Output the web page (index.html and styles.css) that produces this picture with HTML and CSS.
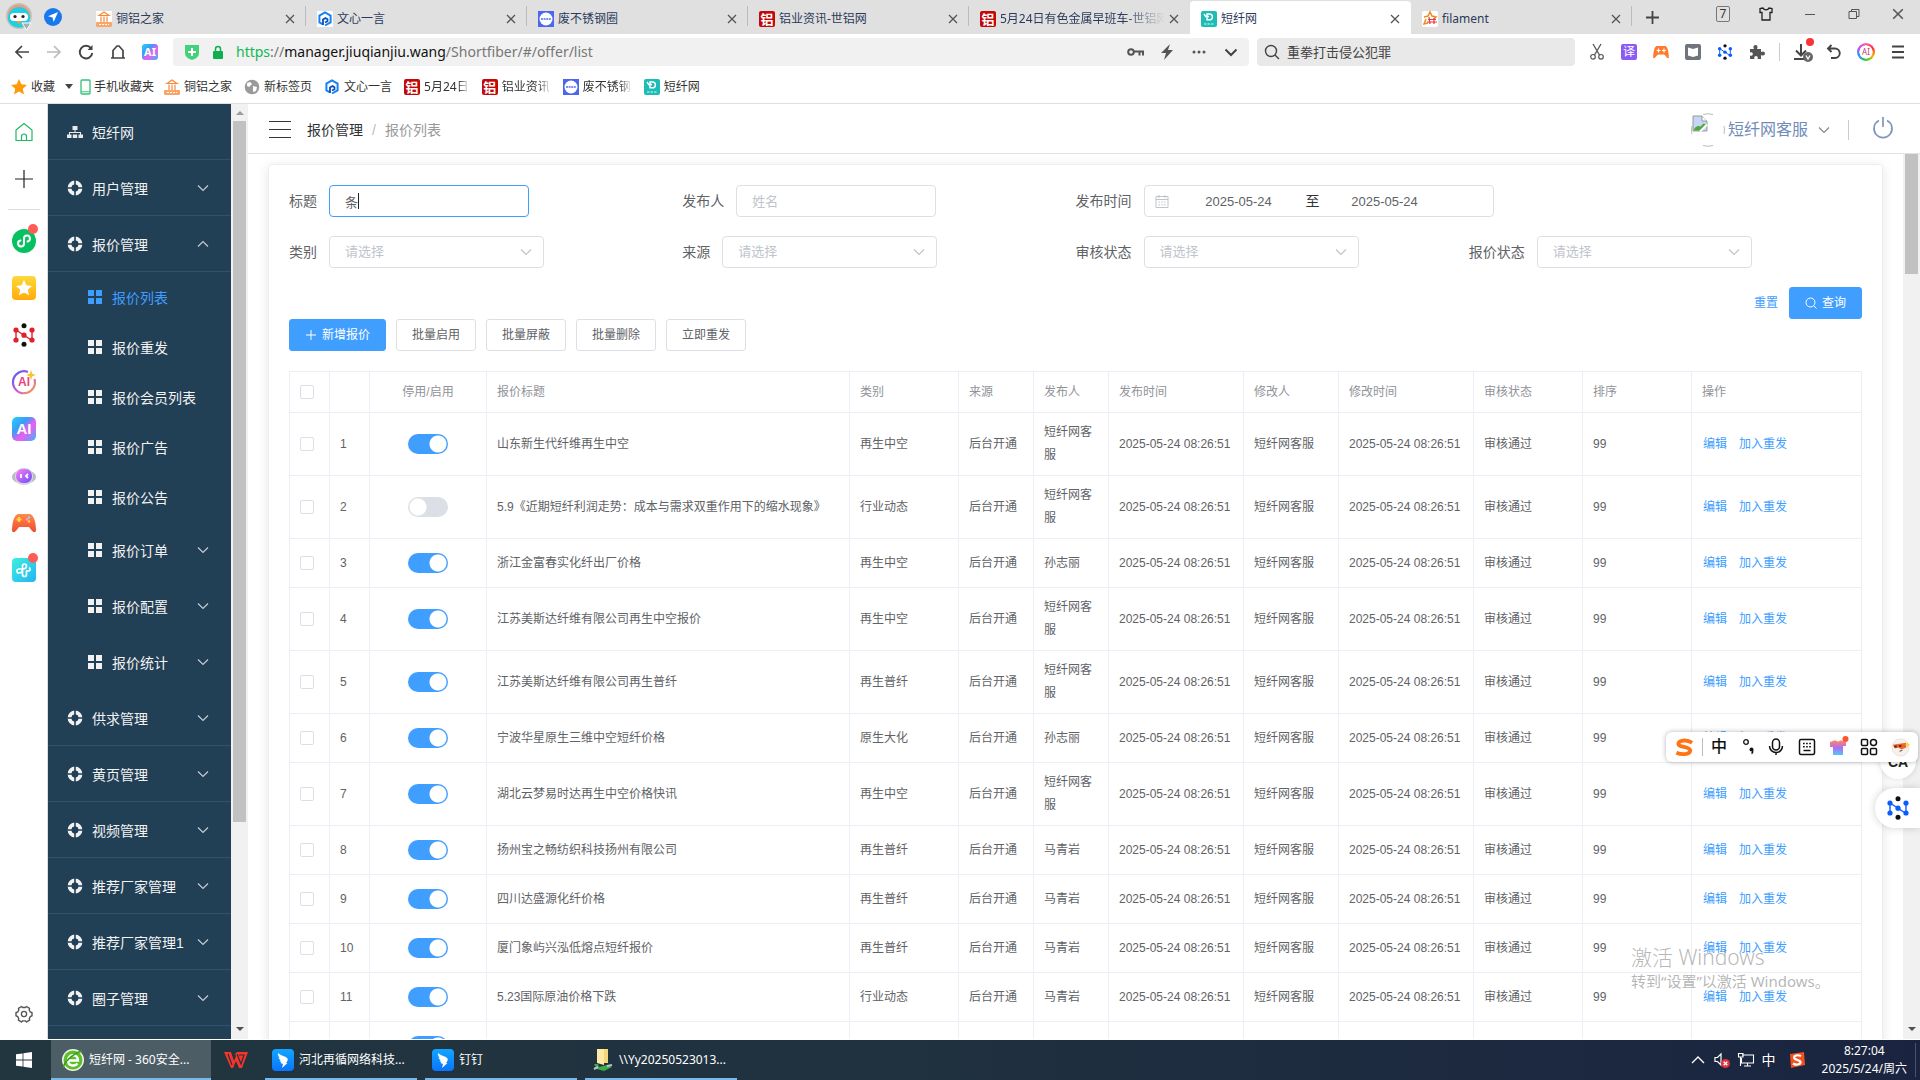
FILE: index.html
```html
<!DOCTYPE html>
<html lang="zh-CN">
<head>
<meta charset="utf-8">
<title>短纤网</title>
<link rel="stylesheet" href="styles.css">
</head>
<body>
<svg class="defs" aria-hidden="true">
  <defs>
    <linearGradient id="g-ai" x1="0" y1="0" x2="1" y2="1"><stop offset="0" stop-color="#22d3f5"/><stop offset=".35" stop-color="#3b9cf8"/><stop offset=".6" stop-color="#f25bf0"/><stop offset="1" stop-color="#38b6ff"/></linearGradient>
    <linearGradient id="g-ring" x1="0" y1="0" x2="1" y2="1"><stop offset="0" stop-color="#4a5cf0"/><stop offset=".5" stop-color="#c05ae0"/><stop offset="1" stop-color="#ffa53a"/></linearGradient>
    <linearGradient id="g-star" x1="0" y1="0" x2="0" y2="1"><stop offset="0" stop-color="#ffd93b"/><stop offset="1" stop-color="#ffab0a"/></linearGradient>
    <linearGradient id="g-bot" x1="0" y1="0" x2="1" y2="1"><stop offset="0" stop-color="#ff7ef2"/><stop offset="1" stop-color="#6a4dff"/></linearGradient>
    <linearGradient id="g-pad" x1="0" y1="0" x2="0" y2="1"><stop offset="0" stop-color="#ff8a4a"/><stop offset="1" stop-color="#f04a32"/></linearGradient>
    <linearGradient id="g-clover" x1="0" y1="0" x2="1" y2="1"><stop offset="0" stop-color="#3cf0dc"/><stop offset="1" stop-color="#22b4f5"/></linearGradient>
    <linearGradient id="g-shirt" x1="0" y1="0" x2="0" y2="1"><stop offset="0" stop-color="#ff8a5c"/><stop offset=".5" stop-color="#b06cf5"/><stop offset="1" stop-color="#4cc8ff"/></linearGradient>
    <linearGradient id="g-ding" x1="0" y1="0" x2="0" y2="1"><stop offset="0" stop-color="#12a6ff"/><stop offset="1" stop-color="#0a74ff"/></linearGradient>
    <symbol id="close" viewBox="0 0 10 10"><path d="M1 1l8 8M9 1L1 9" fill="none" stroke="currentColor" stroke-width="1.300"/></symbol>
    <symbol id="down" viewBox="0 0 12 12"><path d="M1 3.500l5 5 5-5" fill="none" stroke="currentColor" stroke-width="1.200"/></symbol>
    <symbol id="up" viewBox="0 0 12 12"><path d="M1 8.500l5-5 5 5" fill="none" stroke="currentColor" stroke-width="1.200"/></symbol>
    <symbol id="help" viewBox="0 0 16 16"><circle cx="8" cy="8" r="5.400" fill="none" stroke="currentColor" stroke-width="4"/><path d="M8 0v16M0 8h16" stroke="#213f55" stroke-width="1.600"/><circle cx="8" cy="8" r="3.300" fill="#213f55"/></symbol>
    <symbol id="menu" viewBox="0 0 14 14"><path d="M0 0h6v6H0zM8 0h6v6H8zM0 8h6v6H0zM8 8h6v6H8z" fill="currentColor"/></symbol>
    <symbol id="bank" viewBox="0 0 16 16"><rect width="16" height="16" fill="#fff"/><path d="M3 4.500L8 1l5 3.500zM5 5.500V11M8 5.500V11M11 5.500V11" fill="none" stroke="#f58a3a" stroke-width="1.200"/><rect y="11" width="16" height="5" rx="1" fill="#f9a66b"/><path d="M3 13.500h10" stroke="#fff" stroke-dasharray="2 1"/></symbol>
    <symbol id="wenxin" viewBox="0 0 16 16"><rect width="16" height="16" rx="1" fill="#fff"/><path d="M6 13.300L2.400 11.300V4.700L8 1.500l5.600 3.200v6.600L8 14.500" fill="none" stroke="#1683f5" stroke-width="2"/><path d="M6 14V8.500l2.500-1.500 2 1.300v2L8 11.500" fill="none" stroke="#0b4fc0" stroke-width="1.800"/></symbol>
    <symbol id="steel" viewBox="0 0 16 16"><rect width="16" height="16" fill="#4c66ee"/><circle cx="8" cy="8" r="6.500" fill="#fff"/><path d="M3 8h10" stroke="#7d90f3" stroke-width="2" stroke-dasharray="2 .6"/></symbol>
    <symbol id="duan" viewBox="0 0 16 16"><rect width="16" height="16" rx="2" fill="#1ebcb4"/><path d="M6 3h2.500a2.800 2.800 0 0 1 0 5.800H6zM4 5.500h4M3 3l2 3" fill="none" stroke="#fff" stroke-width="1.400"/><path d="M3 13h10" stroke="#8fe6df" stroke-width="1.600" stroke-dasharray="2.500 1"/></symbol>
    <symbol id="nodes" viewBox="0 0 24 24"><path d="M4 17.500V7l16 10.500V7" fill="none" stroke="currentColor" stroke-width="1.400"/><g fill="currentColor"><circle cx="4" cy="7" r="2.600"/><circle cx="4" cy="17" r="2.600"/><circle cx="20" cy="7" r="2.600"/><circle cx="20" cy="17" r="2.600"/><circle cx="12" cy="12.200" r="2.600"/></g><circle cx="12" cy="2.800" r="2.500" fill="#111"/><circle cx="12" cy="21.200" r="2.500" fill="#111"/></symbol>
    <symbol id="ding" viewBox="0 0 22 22"><rect width="22" height="22" rx="4" fill="url(#g-ding)"/><path d="M6 4c3 3 8 3 9.500 5.500.8 1.500-.5 3.500-1.500 4.500h1.500L10 19l1-4-2.500-1 .8-1L7.500 12l1-.8L6.500 9l1-.5C6 7 6 5.500 6 4z" fill="#fff"/></symbol>
  </defs>
</svg>

<header class="browser">
  <div class="tabstrip">
    <div class="profile">
      <svg width="26" height="28" viewBox="0 0 26 28"><circle cx="13" cy="13" r="13" fill="#bfc4c6"/><circle cx="13" cy="13" r="11.500" fill="#f69a76"/><path d="M2 15a11 11 0 0 1 22 0 11 9.500 0 0 1-22 0z" fill="#20cfe4"/><rect x="4" y="10" width="18" height="8" rx="4" fill="#fff"/><circle cx="9" cy="13.500" r="1.600" fill="#222"/><circle cx="17" cy="13.500" r="1.600" fill="#222"/><path d="M10 18h6l-3 3z" fill="#ff9b2e"/><path d="M16 20h9l-4.500 7z" fill="#a9adb0" stroke="#fff"/></svg>
      <svg width="18" height="18" viewBox="0 0 18 18"><circle cx="9" cy="9" r="9" fill="#1878ee"/><path d="M14 4L9.700 14 8.500 9.600 4 8.300z" fill="#fff"/></svg>
    </div>
    <div class="tab"><svg class="fav"><use href="#bank"/></svg><span>铜铝之家</span><button aria-label="关闭"><svg><use href="#close"/></svg></button></div>
    <div class="tab"><svg class="fav"><use href="#wenxin"/></svg><span>文心一言</span><button aria-label="关闭"><svg><use href="#close"/></svg></button></div>
    <div class="tab"><svg class="fav"><use href="#steel"/></svg><span>废不锈钢圈</span><button aria-label="关闭"><svg><use href="#close"/></svg></button></div>
    <div class="tab"><b class="lv">铝</b><span>铝业资讯-世铝网</span><button aria-label="关闭"><svg><use href="#close"/></svg></button></div>
    <div class="tab"><b class="lv">铝</b><span class="fade">5月24日有色金属早班车-世铝网</span><button aria-label="关闭"><svg><use href="#close"/></svg></button></div>
    <div class="tab active"><svg class="fav"><use href="#duan"/></svg><span>短纤网</span><button aria-label="关闭"><svg><use href="#close"/></svg></button></div>
    <div class="tab"><svg class="fav" viewBox="0 0 16 16"><rect width="16" height="16" rx="2" fill="#fff"/><path d="M2 6l4-1 2-4 2 4 4 1-2 2M4 8l-2 5 4-1" fill="none" stroke="#f08a24" stroke-width="1.500"/><path d="M5 11h10M6 8.500h8M7 6l1 7M12 7v6" stroke="#e23b3b" stroke-width="1.200"/></svg><span>filament</span><button aria-label="关闭"><svg><use href="#close"/></svg></button></div>
    <button class="newtab" aria-label="新标签"><svg width="13" height="13" viewBox="0 0 13 13"><path d="M6.500 0v13M0 6.500h13" stroke="#444" stroke-width="1.800"/></svg></button>
    <div class="wincontrols">
      <button class="count">7</button>
      <button aria-label="皮肤"><svg width="14" height="14" viewBox="0 0 14 14"><path d="M4 1L1 1.500v4h2V13h8V5.500h2v-4L10 1C9 3.500 5 3.500 4 1z" fill="none" stroke="#222" stroke-width="1.300"/></svg></button>
      <button aria-label="最小化"><svg width="12" height="12" viewBox="0 0 12 12"><path d="M1 6.500h10" stroke="#555"/></svg></button>
      <button aria-label="还原"><svg width="12" height="12" viewBox="0 0 12 12"><path d="M1 3.500h7.500v7H1zM3.500 3.500v-2H11v7H8.500" fill="none" stroke="#555"/></svg></button>
      <button aria-label="关闭窗口"><svg width="12" height="12"><use href="#close"/></svg></button>
    </div>
  </div>

  <div class="addressrow">
    <nav class="navbtns">
      <svg viewBox="0 0 16 16"><path d="M15 8H2M8 2L2 8l6 6" fill="none" stroke="#444" stroke-width="1.700"/></svg>
      <svg viewBox="0 0 16 16"><path d="M1 8h13M8 2l6 6-6 6" fill="none" stroke="#bbb" stroke-width="1.700"/></svg>
      <svg viewBox="0 0 16 16"><path d="M13 4.200A6.300 6.300 0 1 0 14.300 9" fill="none" stroke="#444" stroke-width="1.900"/><path d="M14.500 1v5h-5z" fill="#444"/></svg>
      <svg viewBox="0 0 16 16"><path d="M3 14V6.500L7 2h2l4 4.500V14M1 14h14" fill="none" stroke="#444" stroke-width="1.700"/></svg>
      <svg viewBox="0 0 16 16"><rect width="16" height="16" rx="3" fill="url(#g-ai)"/><text x="8" y="12" class="ai-s" fill="#fff">AI</text></svg>
    </nav>
    <div class="urlbar">
      <svg width="16" height="16" viewBox="0 0 16 16"><path d="M1 1h14v8c0 4-4 6-7 7-3-1-7-3-7-7z" fill="#43d17a"/><path d="M8 4v8M4 8h8" stroke="#fff" stroke-width="2"/></svg>
      <svg width="12" height="14" viewBox="0 0 12 14"><rect x="1" y="6" width="10" height="8" rx="1" fill="#0cb04e"/><path d="M3.500 6V4a2.500 2.500 0 0 1 5 0v2" fill="none" stroke="#0cb04e" stroke-width="1.500"/></svg>
      <p class="url"><span class="scheme">https</span>://<span class="host">manager.jiuqianjiu.wang</span>/Shortfiber/#/offer/list</p>
      <div class="urlicons">
        <svg viewBox="0 0 16 16"><circle cx="4" cy="8" r="2.800" fill="none" stroke="#555" stroke-width="2"/><path d="M7 7.500h9v4M12.500 7.500v4" fill="none" stroke="#555" stroke-width="2"/></svg>
        <svg viewBox="0 0 16 16"><path d="M11 0L2 9h5l-2 7 9-10H9z" fill="#555"/></svg>
        <svg viewBox="0 0 16 16"><g fill="#555"><circle cx="3" cy="8" r="1.500"/><circle cx="8" cy="8" r="1.500"/><circle cx="13" cy="8" r="1.500"/></g></svg>
        <svg viewBox="0 0 16 16"><path d="M2.500 5.500L8 11l5.500-5.500" fill="none" stroke="#444" stroke-width="2"/></svg>
      </div>
    </div>
    <div class="searchbar">
      <svg width="16" height="16" viewBox="0 0 16 16"><circle cx="7" cy="7" r="5.500" fill="none" stroke="#444" stroke-width="1.400"/><path d="M11 11l4 4" stroke="#444" stroke-width="1.400"/></svg>
      <span>重拳打击侵公犯罪</span>
    </div>
    <div class="tools">
      <svg viewBox="0 0 16 16"><path d="M4 0l6.500 11M12 0L5.500 11" stroke="#555" stroke-width="1.300"/><circle cx="4" cy="12.800" r="2.300" fill="none" stroke="#555" stroke-width="1.200"/><circle cx="12" cy="12.800" r="2.300" fill="none" stroke="#555" stroke-width="1.200"/></svg>
      <b class="yi">译</b>
      <svg viewBox="0 0 16 16"><path d="M3.500 2h9C15 3 16 10 15.800 14c-2 1-3-3-5-3.500h-5.500C3.500 11 2 15 .2 14 0 10 1 3 3.500 2z" fill="#ff7a2e"/><path d="M5.500 4.500v4M3.500 6.500h4M9 6.500h4M11 4.500v4" stroke="#fff" stroke-width="1.200"/></svg>
      <svg viewBox="0 0 16 16"><rect width="16" height="16" rx="2" fill="#70757d"/><path d="M3 3.500l5 1.500 5-1.500v8L8 13l-5-1.500z" fill="#fff"/></svg>
      <svg class="blue"><use href="#nodes"/></svg>
      <svg viewBox="0 0 16 16"><path d="M1 5h4c-1.500-3 .5-4 1.500-4S9.500 2 8 5h4v3c3-1.500 4 .5 4 1.500S15 12.500 12 11v4H8.500c1-2-.5-3-1.500-3s-2.500 1-1.500 3H1v-3.500c2 .8 2.800-.3 2.800-1.500S3 7.700 1 8.500z" fill="#555"/></svg>
      <i class="vline"></i>
      <svg class="dl" viewBox="0 0 20 20"><path d="M8 2v11M3 8.500l5 5 5-5M1 17h11" fill="none" stroke="#444" stroke-width="2"/><circle cx="15" cy="15" r="5" fill="#666"/><path d="M13 13.500l2 3.500 2-3.500" fill="none" stroke="#fff" stroke-width="1.300"/><circle cx="17" cy="0" r="4" fill="#fa3434"/></svg>
      <svg viewBox="0 0 16 16"><path d="M5.500 1L2 4.500 5.500 8M2 4.500h7a4.500 4.500 0 0 1 0 9.500H5" fill="none" stroke="#444" stroke-width="1.900"/></svg>
      <i class="aiball">AI</i>
      <svg viewBox="0 0 16 16"><path d="M2 2.500h12M2 8h12M2 13.500h12" stroke="#444" stroke-width="2"/></svg>
    </div>
  </div>

  <nav class="bookmarks">
    <a href="#" class="fav-root"><svg viewBox="0 0 16 16"><path d="M8 0l2.400 5.300 5.600.6-4.200 3.800 1.200 5.800L8 12.600l-5 2.900 1.200-5.800L0 5.900l5.600-.6z" fill="#ff9a0a"/></svg><span>收藏</span><i class="caret-down"></i></a>
    <a href="#" class="phone"><svg viewBox="0 0 16 16"><rect x="4" y="1" width="9" height="14" rx="1" fill="none" stroke="#36c27a" stroke-width="1.300"/><path d="M4 12.800h9" stroke="#36c27a"/></svg><span>手机收藏夹</span></a>
    <a href="#"><svg><use href="#bank"/></svg><span>铜铝之家</span></a>
    <a href="#"><svg viewBox="0 0 16 16"><circle cx="8" cy="8" r="7.300" fill="#9a9a9a"/><path d="M3 4l3-1 2 2-3 3-2-1zM9 7l4 1-1 4-3 1z" fill="#fff"/></svg><span>新标签页</span></a>
    <a href="#"><svg><use href="#wenxin"/></svg><span>文心一言</span></a>
    <a href="#"><b class="lv">铝</b><span class="fade">5月24日</span></a>
    <a href="#"><b class="lv">铝</b><span class="fade">铝业资讯</span></a>
    <a href="#"><svg><use href="#steel"/></svg><span class="fade">废不锈钢</span></a>
    <a href="#"><svg><use href="#duan"/></svg><span>短纤网</span></a>
  </nav>
</header>

<div class="workspace">
  <aside class="rail">
    <div class="cell"><svg width="20" height="20" viewBox="0 0 18 20"><path d="M1 8l8-6.500L17 8v10.500H1zM6.500 18.500v-4a2.500 2.500 0 0 1 5 0v4" fill="none" stroke="#1fb864" stroke-width="1.200"/></svg></div>
    <div class="cell"><svg width="18" height="18" viewBox="0 0 18 18"><path d="M9 0v18M0 9h18" stroke="#222" stroke-width="1.200"/></svg></div>
    <i class="hline"></i>
    <div class="cell dot"><svg viewBox="0 0 24 24"><circle cx="12" cy="12" r="12" fill="#07c160"/><path d="M8.500 11.500a3 3 0 1 0 3.500 3.500V9a3 3 0 1 1 3.500 3.500" fill="none" stroke="#fff" stroke-width="2" stroke-linecap="round"/></svg></div>
    <div class="cell"><svg viewBox="0 0 24 24"><rect width="24" height="24" rx="4" fill="url(#g-star)"/><path d="M12 4l2.400 5.300 5.600.6-4.200 3.800 1.200 5.500-5-2.800-5 2.800 1.200-5.500L4 9.900l5.600-.6z" fill="#fff"/></svg></div>
    <div class="cell"><svg class="red"><use href="#nodes"/></svg></div>
    <div class="cell"><svg viewBox="0 0 24 24"><path d="M16 2A11 11 0 1 0 22.500 9" fill="none" stroke="url(#g-ring)" stroke-width="2.200"/><path d="M19 0l1.300 3.700L24 5l-3.700 1.300L19 10l-1.300-3.700L14 5l3.700-1.300z" fill="#f5c62c"/><text x="12" y="16" class="ai-m" fill="#e8457e">AI</text></svg></div>
    <div class="cell"><svg viewBox="0 0 24 24"><rect width="24" height="24" rx="5" fill="url(#g-ai)"/><text x="12" y="17" class="ai-l" fill="#fff">AI</text></svg></div>
    <div class="cell"><svg viewBox="0 0 24 24"><ellipse cx="12" cy="13" rx="12" ry="7" fill="#b9bcc4"/><rect x="3" y="4" width="18" height="17" rx="8" fill="#d5d7de"/><rect x="4" y="5" width="16" height="14" rx="6.500" fill="url(#g-bot)"/><path d="M9 10v4M16 10l-2 2 2 2" fill="none" stroke="#fff" stroke-width="1.800"/></svg></div>
    <div class="cell"><svg viewBox="0 0 24 24"><path d="M6 3h12c4 1 6 9 6 17-2 3-4 0-7-4H7C4 20 2 23 0 20 0 12 2 4 6 3z" fill="url(#g-pad)"/><path d="M7 6v5M4.500 8.500h5" stroke="#ffd23f" stroke-width="2"/><circle cx="17" cy="6.500" r="1.200" fill="#8adcff"/><circle cx="17" cy="10.500" r="1.200" fill="#ffd23f"/><circle cx="15" cy="8.500" r="1.200" fill="#ff9be0"/></svg></div>
    <div class="cell dot"><svg viewBox="0 0 24 24"><rect width="24" height="24" rx="4" fill="url(#g-clover)"/><path d="M10.500 13.500V8a2 2 0 0 1 4 0c0 2-1.500 3-4 3H7a2 2 0 0 0 0 4c2 0 3.500-1.500 3.500-4M10.500 13v3.500a2 2 0 0 0 4 0V13H17a2 2 0 0 0 0-3.500" fill="none" stroke="#fff" stroke-width="1.700"/></svg></div>
    <div class="cell gear"><svg width="18" height="18" viewBox="0 0 18 18"><path d="M6.500 1.500l1.200 1h2.600l1.200-1 3 1.800-.3 1.700 1.100 2 1.700.8v3l-1.700.8-1 1.900.3 1.600-3 1.800-1.300-1H7.700l-1.300 1-3-1.800.3-1.600-1-1.900L1 10.800v-3L2.700 7l1.100-2-.3-1.700z" fill="none" stroke="#555" stroke-width="1.400"/><circle cx="9" cy="9" r="2.600" fill="none" stroke="#555" stroke-width="1.300"/></svg></div>
  </aside>

  <nav class="sidebar">
    <a href="#" class="item"><svg viewBox="0 0 16 16"><path d="M5.500 2h5v4h-5zM0 10.500h4.500V14H0zM5.800 10.500h4.400V14H5.800zM11.500 10.500H16V14h-4.500zM7.500 6h1v2h5.500v2.500h-1V9H3v1.500H2V8h5.500z" fill="#e9e9ea"/></svg><span>短纤网</span></a>
    <a href="#" class="item"><svg><use href="#help"/></svg><span>用户管理</span><svg class="arrow"><use href="#down"/></svg></a>
    <a href="#" class="item"><svg><use href="#help"/></svg><span>报价管理</span><svg class="arrow"><use href="#up"/></svg></a>
    <a href="#" class="sub current"><svg><use href="#menu"/></svg><span>报价列表</span></a>
    <a href="#" class="sub"><svg><use href="#menu"/></svg><span>报价重发</span></a>
    <a href="#" class="sub"><svg><use href="#menu"/></svg><span>报价会员列表</span></a>
    <a href="#" class="sub"><svg><use href="#menu"/></svg><span>报价广告</span></a>
    <a href="#" class="sub"><svg><use href="#menu"/></svg><span>报价公告</span></a>
    <a href="#" class="sub tall"><svg><use href="#menu"/></svg><span>报价订单</span><svg class="arrow"><use href="#down"/></svg></a>
    <a href="#" class="sub tall"><svg><use href="#menu"/></svg><span>报价配置</span><svg class="arrow"><use href="#down"/></svg></a>
    <a href="#" class="sub tall"><svg><use href="#menu"/></svg><span>报价统计</span><svg class="arrow"><use href="#down"/></svg></a>
    <a href="#" class="item"><svg><use href="#help"/></svg><span>供求管理</span><svg class="arrow"><use href="#down"/></svg></a>
    <a href="#" class="item"><svg><use href="#help"/></svg><span>黄页管理</span><svg class="arrow"><use href="#down"/></svg></a>
    <a href="#" class="item"><svg><use href="#help"/></svg><span>视频管理</span><svg class="arrow"><use href="#down"/></svg></a>
    <a href="#" class="item"><svg><use href="#help"/></svg><span>推荐厂家管理</span><svg class="arrow"><use href="#down"/></svg></a>
    <a href="#" class="item"><svg><use href="#help"/></svg><span>推荐厂家管理1</span><svg class="arrow"><use href="#down"/></svg></a>
    <a href="#" class="item"><svg><use href="#help"/></svg><span>圈子管理</span><svg class="arrow"><use href="#down"/></svg></a>
  </nav>
  <div class="scroll side"><i class="tri-up"></i><i class="thumb"></i><i class="tri-down"></i></div>

  <main class="content">
    <header class="pagehead">
      <button class="burger" aria-label="折叠菜单"></button>
      <p class="crumbs"><a href="#">报价管理</a><i>/</i><span>报价列表</span></p>
      <div class="user">
        <svg class="avatar" viewBox="0 0 34 34"><path d="M12 1.500q5-1.500 10 0M12 32.500q5 1.500 10 0M33 13q1 4 0 8M1 13q-1 4 0 8" fill="none" stroke="#bbb"/><path d="M2 3h9l5 5v10H2z" fill="#c5d7f5" stroke="#999"/><path d="M11 3v5h5" fill="#fff" stroke="#999"/><path d="M2.500 17.500c2-5 5-5 7-4l3-3 3 1-6 6z" fill="#4ea83a"/><path d="M9 18.500l7-7" stroke="#fff" stroke-width="2"/></svg>
        <a href="#">短纤网客服</a>
        <svg class="udown"><use href="#down"/></svg>
        <i></i>
        <svg class="power" viewBox="0 0 22 22"><path d="M7 3.500a9 9 0 1 0 8 0M11 0v10" fill="none" stroke="#7f96bd" stroke-width="1.700"/></svg>
      </div>
    </header>

    <div class="scrollarea">
      <div class="viewport">
        <section class="card">
          <form class="filters">
            <div class="field"><label for="f-title">标题</label><div class="titlebox"><input id="f-title" class="focused" value="条"><i class="caret"></i></div></div>
            <div class="field"><label for="f-pub">发布人</label><input id="f-pub" placeholder="姓名"></div>
            <div class="field wide"><label for="f-from">发布时间</label><div class="range"><svg width="14" height="14" viewBox="0 0 14 14"><path d="M1 2.500h12v11H1zM1 5.500h12M4 1v3M10 1v3M3.500 8h1.500M6.300 8h1.500M9 8h1.500M3.500 10.800h1.500M6.300 10.800h1.500M9 10.800h1.500" fill="none" stroke="#c0c4cc"/></svg><input id="f-from" value="2025-05-24"><span>至</span><input aria-label="结束日期" value="2025-05-24"></div></div>
            <div class="field"><label for="f-cat">类别</label><div class="select"><select id="f-cat"><option>请选择</option></select><svg><use href="#down"/></svg></div></div>
            <div class="field"><label for="f-src">来源</label><div class="select"><select id="f-src"><option>请选择</option></select><svg><use href="#down"/></svg></div></div>
            <div class="field"><label for="f-aud">审核状态</label><div class="select"><select id="f-aud"><option>请选择</option></select><svg><use href="#down"/></svg></div></div>
            <div class="field"><label for="f-st">报价状态</label><div class="select"><select id="f-st"><option>请选择</option></select><svg><use href="#down"/></svg></div></div>
          </form>
          <div class="submit"><a href="#">重置</a><button class="btn primary"><svg width="12" height="12" viewBox="0 0 12 12"><circle cx="5.500" cy="5.500" r="4.500" fill="none" stroke="#fff"/><path d="M8.800 8.800l2.700 2.700" stroke="#fff"/></svg>查询</button></div>
          <div class="actions">
            <button class="btn primary"><svg width="12" height="12" viewBox="0 0 12 12"><path d="M6 1v10M1 6h10" stroke="#fff"/></svg>新增报价</button>
            <button class="btn">批量启用</button>
            <button class="btn">批量屏蔽</button>
            <button class="btn">批量删除</button>
            <button class="btn">立即重发</button>
          </div>
          <table>
            <colgroup><col class="w40"><col class="w40"><col class="w117"><col class="w363"><col class="w109"><col class="w75"><col class="w75"><col class="w135"><col class="w95"><col class="w135"><col class="w109"><col class="w109"><col></colgroup>
            <thead><tr><th><input type="checkbox" aria-label="全选"></th><th></th><th class="mid">停用/启用</th><th>报价标题</th><th>类别</th><th>来源</th><th>发布人</th><th>发布时间</th><th>修改人</th><th>修改时间</th><th>审核状态</th><th>排序</th><th>操作</th></tr></thead>
            <tbody id="rows"></tbody>
          </table>
        </section>
      </div>
      <div class="scroll page"><i class="thumb"></i><i class="tri-down"></i></div>
    </div>
  </main>
</div>

<footer class="taskbar">
  <button class="start" aria-label="开始"><svg width="16" height="16" viewBox="0 0 16 16"><path d="M0 2.300L6.600 1.400v6.200H0zM7.400 1.300L16 0v7.600H7.400zM0 8.400h6.600v6.200L0 13.700zM7.400 8.400H16V16l-8.600-1.300z" fill="#fff"/></svg></button>
  <button class="task on first"><svg viewBox="0 0 22 22"><circle cx="11" cy="11" r="11" fill="#eef5e8"/><circle cx="11" cy="11" r="9.500" fill="#5cbf2a"/><path d="M6 11.500h10c0-7-9.500-7-10-.5-.3 6 6.500 7 9.500 3.500" fill="none" stroke="#fff" stroke-width="2.400"/><path d="M2 19c-2-4 8-14 18-17" fill="none" stroke="#3f9c18" stroke-width="1.500"/></svg><span>短纤网 - 360安全...</span></button>
  <button class="wps" aria-label="WPS"><svg width="24" height="18" viewBox="0 0 24 18"><path d="M0 1h7l3 9 2-5-1-2 2-2h11l-6 16h-3l-3-7-3 7H7z" fill="#f8352a"/><path d="M4 3l4 11M13 3l4 10 3-9h-5" fill="none" stroke="#21343f" stroke-width="1.200"/></svg></button>
  <button class="task"><svg><use href="#ding"/></svg><span>河北再循网络科技...</span></button>
  <button class="task"><svg><use href="#ding"/></svg><span>钉钉</span></button>
  <button class="task"><svg viewBox="0 0 22 22"><path d="M5 0h11v14H5z" fill="#f5d67a"/><path d="M5 0h7v16l-7-2z" fill="#ffe9a6"/><path d="M2 15h4l1 3 8-2 5 2-8 4-7-2z" fill="#3faa4c"/><path d="M2 20l4-2M15 17l5-1" stroke="#b9c4cc" stroke-width="2"/></svg><span>\\Yy20250523013...</span></button>
  <div class="tray">
    <svg viewBox="0 0 16 16"><path d="M2 11l6-6 6 6" fill="none" stroke="#fff" stroke-width="1.400"/></svg>
    <svg viewBox="0 0 16 16"><path d="M1 5.500h2.500L7 2v11L3.500 9.500H1z" fill="none" stroke="#fff" stroke-width="1.200"/><circle cx="11.500" cy="11.500" r="4.500" fill="#e0323c"/><path d="M9.700 9.700l3.600 3.600M13.300 9.700l-3.600 3.600" stroke="#fff" stroke-width="1.300"/></svg>
    <svg viewBox="0 0 16 16"><path d="M4 3h11.500v8H3.500V6M6 14h7M9.500 11v3M.5 1.500H5V5H.5zM2.500 5v9" fill="none" stroke="#fff" stroke-width="1.100"/></svg>
    <span>中</span>
    <svg viewBox="0 0 16 16" class="sogou"><path d="M1 2l14-2 1 13-14 3z" fill="#f2501e"/><path d="M12 4C7 2 4 4.500 5.500 6.500S12 8 11.500 10.500 6 13 4 11.500" fill="none" stroke="#fff" stroke-width="2.200"/></svg>
    <div class="clock"><span>8:27:04</span><span>2025/5/24/周六</span></div>
  </div>
</footer>

<div class="watermark"><p>激活 Windows</p><p class="small">转到“设置”以激活 Windows。</p></div>
<div class="translate">CA</div>
<div class="nodepill"><svg><use href="#nodes"/></svg></div>
<div class="ime">
  <svg class="s" viewBox="0 0 20 18"><path d="M18 4C12 0 4 1.500 3.500 5.200S16.500 8 16 12.500 6 16.500 1.500 14.500" fill="none" stroke="#ff7312" stroke-width="4"/></svg>
  <i></i>
  <b>中</b>
  <svg class="punct" viewBox="0 0 18 18"><circle cx="6" cy="4" r="2.300" fill="none" stroke="#111" stroke-width="1.300"/><path d="M11.500 15.500q1.500-.8 1.200-3" fill="none" stroke="#111" stroke-width="1.500"/><circle cx="11.500" cy="11.500" r="2" fill="#111"/></svg>
  <svg viewBox="0 0 18 18"><rect x="5.500" y="1" width="7" height="11" rx="3.500" fill="none" stroke="#111" stroke-width="1.500"/><path d="M2.500 8a6.500 6.500 0 0 0 13 0M9 14.500V17" fill="none" stroke="#111" stroke-width="1.500"/></svg>
  <svg viewBox="0 0 18 18"><rect x="1.500" y="1.500" width="15" height="15" rx="1.500" fill="none" stroke="#111" stroke-width="1.500"/><path d="M5 5.500h8M5 8.700h8" stroke="#111" stroke-width="1.500" stroke-dasharray="1.700 1.400"/><path d="M5.500 12.500h7" stroke="#111" stroke-width="1.500"/></svg>
  <svg viewBox="0 0 18 18"><path d="M1 4l4-1.500h2q2 2 4 0h2L17 4v4h-3v9H4V9H1z" fill="url(#g-shirt)"/><circle cx="16.500" cy="1" r="3" fill="#ff5230"/></svg>
  <svg viewBox="0 0 18 18"><g fill="none" stroke="#111" stroke-width="1.500"><rect x="1.500" y="1.500" width="6" height="6" rx="1"/><circle cx="13.500" cy="4.500" r="3"/><rect x="1.500" y="10.500" width="6" height="6" rx="1"/><rect x="10.500" y="10.500" width="6" height="6" rx="1"/></g></svg>
  <svg class="s" viewBox="0 0 20 20"><circle cx="10" cy="10" r="9" fill="#f7f1ee" stroke="#eadfda"/><path d="M2 7l14-2v5l-5 2-3-2-4 1z" fill="#f0652a"/><path d="M3 8.500l3-1v2.500H4zM8 8l3-1v2l-2 1z" fill="#5a2413"/><path d="M9 14l3-1" stroke="#444"/><path d="M17.500 4l.8 2.200 2 .8-2 .8-.8 2.200-.8-2.200-2-.8 2-.8z" fill="#ffd228"/></svg>
</div>
<script src="script.js"></script>
</body>
</html>
```
FILE: styles.css
```css
* { box-sizing: border-box; }
body {
  margin: 0;
  height: 100vh;
  display: flex;
  flex-direction: column;
  overflow: hidden;
  font: 12px/16px "Liberation Sans", "Noto Sans CJK SC", sans-serif;
  color: #606266;
  background: #fff;
}
p { margin: 0; }
a { color: inherit; text-decoration: none; }
button { font: inherit; color: inherit; border: 0; padding: 0; background: none; }
svg { flex: none; overflow: visible; }
i { font-style: normal; }
.defs { position: absolute; width: 0; height: 0; }
.ai-s, .ai-m, .ai-l { font-weight: 700; text-anchor: middle; }
.ai-s { font-size: 11px; }
.ai-m { font-size: 12px; }
.ai-l { font-size: 15px; }

/* browser frame */
.browser { flex: none; font-family: "Noto Sans", "Noto Sans CJK SC", sans-serif; border-bottom: 1px solid #e0e0e0; }
.tabstrip { display: flex; height: 34px; background: #e0e0e0; }
.profile { width: 85px; display: flex; align-items: center; gap: 12px; padding-left: 6px; flex: none; }
.tab {
  flex: 0 1 221px;
  min-width: 0;
  display: flex;
  align-items: center;
  gap: 4px;
  margin-top: 1px;
  padding: 2px 11px 0;
  color: #2c3a5a;
  position: relative;
}
.tab::after { content: ""; position: absolute; right: 0; top: 5px; height: 20px; width: 1px; background: #bbb; }
.tab.active { background: #fff; border-radius: 4px 4px 0 0; }
.tab.active::after, .tab:has(+ .active)::after { display: none; }
.tab span { flex: 1; min-width: 0; white-space: nowrap; overflow: hidden; }
.tab button { width: 10px; height: 14px; color: #555; }
.tab button svg { width: 10px; height: 10px; }
.fav { width: 16px; height: 16px; }
.fade { -webkit-mask-image: linear-gradient(to right, #000 75%, transparent); mask-image: linear-gradient(to right, #000 75%, transparent); }
.lv { width: 16px; height: 16px; border-radius: 2px; background: #c40808; color: #fff; font-size: 13px; line-height: 16px; text-align: center; flex: none; }
.newtab { flex: none; width: 13px; margin-left: 14px; padding-top: 4px; }
.wincontrols { margin-left: auto; display: flex; align-items: center; gap: 28px; padding: 0 14px 6px 0; }
.wincontrols button { width: 16px; height: 16px; display: grid; place-items: center; color: #555; }
.wincontrols .count { width: 14px; border: 1px solid #777; border-radius: 2px; line-height: 14px; color: #333; }

.addressrow { display: flex; height: 36px; align-items: center; }
.navbtns { width: 173px; display: flex; gap: 16px; padding-left: 14px; flex: none; }
.navbtns svg, .urlicons svg, .tools svg { width: 16px; height: 16px; }
.urlbar { flex: 1; height: 28px; background: #f1f1f1; border-radius: 4px; display: flex; align-items: center; padding: 0 10px 0 11px; }
.urlbar > svg + svg { margin-left: 12px; }
.url { margin-left: 12px; font-size: 14px; line-height: 20px; color: #777; }
.scheme { color: #12b755; }
.host { color: #111; }
.urlicons { margin-left: auto; display: flex; gap: 16px; }
.searchbar { width: 318px; height: 28px; margin-left: 8px; background: #e9e9e9; border-radius: 4px; display: flex; align-items: center; gap: 7px; padding-left: 7px; font-size: 13px; color: #444; }
.tools { display: flex; align-items: center; gap: 16px; padding: 0 14px; }
.tools .yi { width: 16px; height: 16px; background: #8a5cf5; border-radius: 2px; color: #fff; font-weight: 400; text-align: center; }
.tools .blue { color: #0a5cff; }
.vline { width: 1px; height: 18px; background: #ccc; margin: 0 -2px; }
.tools .dl { width: 20px; height: 20px; margin: 0 -3px 0 -1px; }
.aiball { width: 18px; height: 18px; margin: 0 -1px; border-radius: 50%; padding: 3px; font-size: 8px; line-height: 12px; text-align: center; color: #c2366f;
  background: radial-gradient(#fff 50%, transparent 54%), conic-gradient(#ff5bb0, #f33, #ffb400, #3c3, #29f, #b5f, #ff5bb0); }

.bookmarks { display: flex; align-items: center; gap: 12px; height: 33px; padding-left: 11px; color: #333; }
.bookmarks a { display: flex; align-items: center; gap: 4px; }
.bookmarks svg { width: 16px; height: 16px; }
.bookmarks span { white-space: nowrap; }
.bookmarks .fade { padding-right: 1px; }
.caret-down { border: 4px solid transparent; border-top: 5px solid #444; border-bottom: 0; margin-left: 6px; }
.bookmarks .phone { gap: 1px; margin-right: -2px; }
.bookmarks .fav-root { margin-right: -8px; }

/* workspace */
.workspace { flex: 1; min-height: 0; display: flex; }
.rail { width: 48px; flex: none; border-right: 1px solid #ddd; display: flex; flex-direction: column; align-items: center; padding-top: 4px; }
.cell { height: 47px; display: grid; place-items: center; position: relative; }
.cell svg:not([width]) { width: 24px; height: 24px; }
.hline { width: 32px; height: 1px; background: #ddd; margin: 7px 0; }
.dot::after { content: ""; position: absolute; right: -2px; top: 7px; width: 10px; height: 10px; border-radius: 50%; background: #ff5c57; }
.red { color: #e0202c; }
.gear { margin: auto 0 2px; }

.sidebar { width: 183px; flex: none; background: #213f55; color: #f2f2f2; overflow: hidden; font-size: 14px; line-height: 20px; }
.sidebar span { padding-top: 2px; }
.item, .sub { display: flex; align-items: center; height: 56px; padding: 0 22px 0 19px; }
.item { border-bottom: 1px solid #34506a; }
.item svg { width: 16px; height: 16px; margin-right: 9px; }
.sub { height: 50px; padding-left: 40px; }
.sub svg { width: 14px; height: 14px; margin-right: 10px; }
.sub.tall { height: 56px; }
.sidebar .arrow { width: 12px; height: 12px; margin: 0 0 0 auto; color: #c3ccd3; }
.current { color: #409eff; }

.scroll { width: 17px; flex: none; background: #f1f1f1; display: flex; flex-direction: column; align-items: center; }
.thumb { width: 13px; background: #c1c1c1; }
.side .thumb { height: 75%; }
.page .thumb { height: 120px; }
.tri-up, .tri-down { border: 4px solid transparent; }
.tri-up { border-top: 0; border-bottom: 4px solid #999; margin: 7px 0 6px; }
.tri-down { border-bottom: 0; border-top: 4px solid #505050; margin: auto 0 8px; }

.content { flex: 1; min-width: 0; display: flex; flex-direction: column; }
.pagehead { flex: none; height: 50px; display: flex; align-items: center; padding: 2px 26px 0 21px; border-bottom: 1px solid #e0e2e6; }
.burger { width: 22px; height: 17px; background: linear-gradient(#333 0 1px, transparent 1px 8px, #333 8px 9px, transparent 9px 16px, #333 16px 17px); }
.crumbs { margin-left: 16px; font-size: 14px; line-height: 20px; color: #999; }
.crumbs a { color: #303133; }
.crumbs i { margin: 0 9px; color: #b5bccb; }
.user { margin-left: auto; display: flex; align-items: center; font-size: 16px; line-height: 20px; color: #6f8bb8; }
.avatar { width: 34px; height: 34px; margin-right: 3px; }
.udown { width: 12px; height: 12px; margin: 0 18px 0 10px; color: #888; }
.user i { width: 1px; height: 20px; background: #ccc; }
.power { width: 22px; height: 22px; margin: 0 0 3px 23px; }

.scrollarea { flex: 1; min-height: 0; display: flex; }
.viewport { flex: 1; min-width: 0; overflow: hidden; padding: 10px 20px; }
.card { border: 1px solid #ebeef5; border-radius: 4px; box-shadow: 0 2px 12px rgba(0, 0, 0, .1); padding: 20px; }
.filters { display: grid; grid-template-columns: repeat(4, 1fr); row-gap: 19px; font-size: 14px; line-height: 20px; }
.field { display: flex; align-items: center; gap: 12px; height: 32px; }
.field.wide { grid-column: span 2; }
.field input, .field select {
  width: 200px;
  height: 32px;
  border: 1px solid #dcdfe6;
  border-radius: 4px;
  padding: 0 15px;
  font: 13px/20px "Liberation Sans", "Noto Sans CJK SC", sans-serif;
  color: #606266;
  background: #fff;
  appearance: none;
  outline: none;
}
.field input::placeholder { color: #c0c4cc; }
.field select { width: 215px; color: #c0c4cc; }
.field .focused { border-color: #409eff; }
.titlebox, .select { position: relative; }
.caret { position: absolute; left: 29px; top: 8px; width: 1px; height: 16px; background: #222; }
.select svg { position: absolute; right: 12px; top: 10px; width: 12px; height: 12px; color: #c0c4cc; pointer-events: none; }
.range { width: 350px; height: 32px; border: 1px solid #dcdfe6; border-radius: 4px; display: flex; align-items: center; padding: 0 10px; color: #303133; }
.field .range input { width: 136px; height: 28px; border: 0; padding: 0 0 0 4px; text-align: center; background: none; }
.range span { width: 14px; margin: 0 -5px 0 1px; }
.submit { display: flex; justify-content: flex-end; align-items: center; gap: 11px; margin-top: 19px; color: #409eff; }
.actions { display: flex; gap: 10px; }
.btn { height: 32px; padding: 0 15px; border: 1px solid #dcdfe6; border-radius: 3px; background: #fff; display: flex; align-items: center; gap: 5px; }
.btn.primary { background: #409eff; border-color: #409eff; color: #fff; }

table { width: 100%; margin-top: 20px; table-layout: fixed; border-collapse: separate; border-spacing: 0; border: solid #ebeef5; border-width: 1px 0 0 1px; line-height: 23px; }
th, td { padding: 8px 10px; text-align: left; font-weight: 400; white-space: nowrap; border: solid #ebeef5; border-width: 0 1px 1px 0; height: 49px; }
th { height: 41px; color: #909399; }
.w40 { width: 40px; }
.w75 { width: 75px; }
.w95 { width: 95px; }
.w109 { width: 109px; }
.w117 { width: 117px; }
.w135 { width: 135px; }
.w363 { width: 363px; }
td.wrap { white-space: normal; }
td.mid, th.mid { text-align: center; padding-left: 0; padding-right: 0; }
table input[type=checkbox] { appearance: none; display: inline-block; width: 14px; height: 14px; margin: 0; border: 1px solid #dcdfe6; border-radius: 2px; vertical-align: middle; background: #fff; }
table input.switch { width: 40px; height: 20px; border: 0; border-radius: 10px; background: radial-gradient(circle at 10px 10px, #fff 8px, transparent 9px) #dcdfe6; }
table input.switch:checked { background: radial-gradient(circle at 30px 10px, #fff 8px, transparent 9px) #409eff; }
td:last-child { padding-left: 11px; }
td a { color: #409eff; margin-right: 12px; }

/* taskbar */
.taskbar { flex: none; height: 41px; border-top: 1px solid #fff; display: flex; background: linear-gradient(to right, #21363f, #20313f 45%, #1a2440); color: #fff; font-family: "Noto Sans", "Noto Sans CJK SC", sans-serif; }
.start { width: 48px; margin-right: 3px; display: grid; place-items: center; }
.task { width: 152px; margin-right: 8px; border-bottom: 2px solid #76b9ed; display: flex; align-items: center; gap: 5px; padding: 2px 0 0 7px; white-space: nowrap; }
.task svg { width: 22px; height: 22px; }
.task.first { width: 160px; margin: 0; padding-left: 11px; }
.task.on { background: #4c5d66; }
.wps { width: 54px; padding: 4px 0 0 13px; text-align: left; }
.tray { margin-left: auto; display: flex; align-items: center; gap: 8px; padding-right: 4px; }
.tray > svg { width: 16px; height: 16px; }
.tray > span { font-size: 14px; }
.tray .sogou { margin-left: 5px; }
.clock { margin-left: 9px; padding-right: 8px; border-right: 1px solid #4a5468; display: flex; flex-direction: column; align-items: center; gap: 2px; }

/* floating layers */
.watermark { position: absolute; right: 93px; bottom: 89px; width: 196px; color: rgba(120, 120, 120, .55); font: 300 21px/28px "Noto Sans", "Noto Sans CJK SC", sans-serif; white-space: nowrap; }
.watermark .small { font-weight: 400; font-size: 15px; line-height: 20px; }
.translate { position: absolute; right: 4px; bottom: 301px; width: 36px; height: 36px; border-radius: 50%; background: #fff; box-shadow: 0 0 6px rgba(0, 0, 0, .15); color: #222; font-size: 14px; font-weight: 700; line-height: 38px; text-align: center; }
.nodepill { position: absolute; right: 0; bottom: 252px; width: 45px; height: 40px; border-radius: 20px 0 0 20px; background: #fff; box-shadow: 0 0 8px rgba(0, 0, 0, .18); color: #0a5cff; display: flex; align-items: center; padding-left: 11px; }
.nodepill svg { width: 24px; height: 24px; }
.ime { position: absolute; right: 2px; bottom: 318px; width: 252px; height: 30px; border-radius: 6px; background: #fff; box-shadow: 0 0 5px rgba(0, 0, 0, .3); display: flex; align-items: center; gap: 13px; padding-left: 9px; color: #111; }
.ime svg { width: 18px; height: 18px; }
.ime .s { width: 19px; height: 19px; }
.ime .punct { margin-right: -4px; }
.ime i { width: 1px; height: 18px; margin: 0 -5px; background: #bbb; }
.ime b { font-size: 16px; font-weight: 500; }
```
FILE: script.js
```js
const rows = [
  ["山东新生代纤维再生中空", "再生中空", "短纤网客服", true],
  ["5.9《近期短纤利润走势：成本与需求双重作用下的缩水现象》", "行业动态", "短纤网客服", false],
  ["浙江金富春实化纤出厂价格", "再生中空", "孙志丽", true],
  ["江苏美斯达纤维有限公司再生中空报价", "再生中空", "短纤网客服", true],
  ["江苏美斯达纤维有限公司再生普纤", "再生普纤", "短纤网客服", true],
  ["宁波华星原生三维中空短纤价格", "原生大化", "孙志丽", true],
  ["湖北云梦易时达再生中空价格快讯", "再生中空", "短纤网客服", true],
  ["扬州宝之畅纺织科技扬州有限公司", "再生普纤", "马青岩", true],
  ["四川达盛源化纤价格", "再生普纤", "马青岩", true],
  ["厦门象屿兴泓低熔点短纤报价", "再生普纤", "马青岩", true],
  ["5.23国际原油价格下跌", "行业动态", "马青岩", true],
  ["", "", "", true]
];
const time = "2025-05-24 08:26:51";
document.getElementById("rows").innerHTML = rows.map(([title, kind, who, on], i) => {
  const full = title !== "";
  const t = s => full ? s : "";
  return `<tr>
    <td><input type="checkbox" aria-label="选择第${i + 1}行"></td>
    <td>${t(i + 1)}</td>
    <td class="mid"><input type="checkbox" class="switch" aria-label="启用" ${on ? "checked" : ""}></td>
    <td>${title}</td><td>${kind}</td><td>${t("后台开通")}</td><td class="wrap">${who}</td>
    <td>${t(time)}</td><td>${t("短纤网客服")}</td><td>${t(time)}</td><td>${t("审核通过")}</td><td>${t("99")}</td>
    <td>${t('<a href="#">编辑</a><a href="#">加入重发</a>')}</td>
  </tr>`;
}).join("");
```
